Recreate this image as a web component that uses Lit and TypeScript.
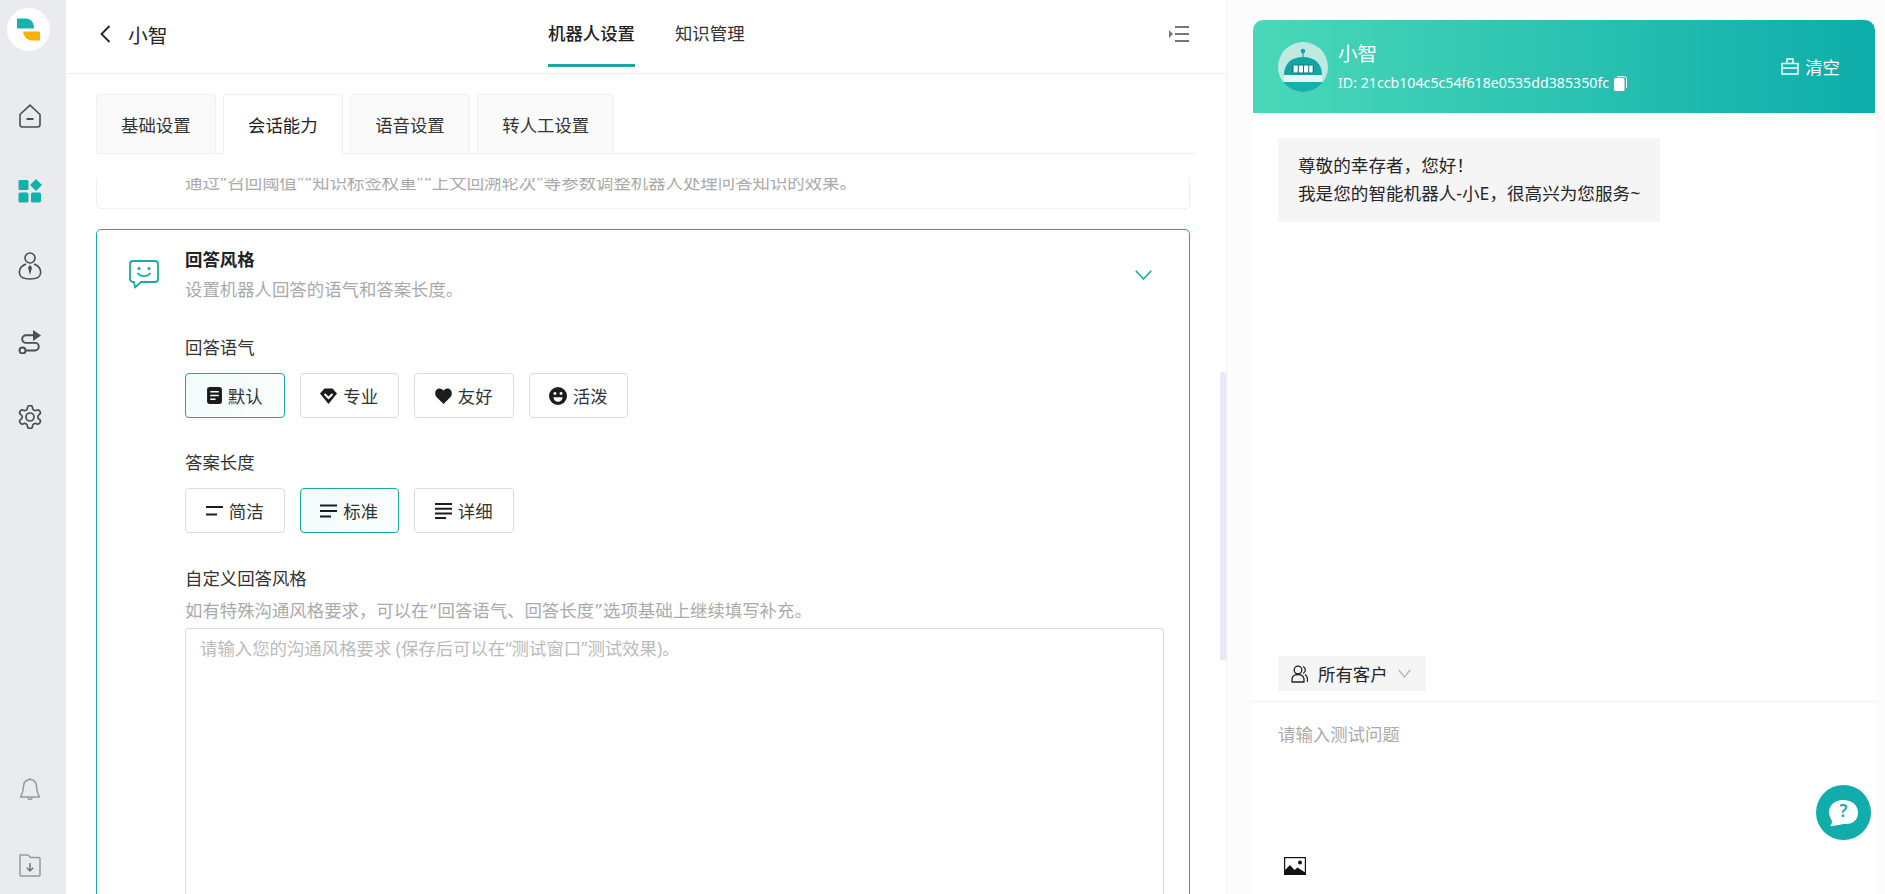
import { LitElement, html, css } from "lit";
import { customElement } from "lit/decorators.js";

const toneIcons = {
  doc: html`<svg width="15" height="17" viewBox="0 0 14 16"><rect width="14" height="16" rx="2.500" fill="#1c1c1c"/><path d="M3 4.500h8M3 8h8M3 11.500h5" stroke="#fff" stroke-width="1.300"/></svg>`,
  gem: html`<svg width="17" height="16" viewBox="0 0 17 16"><path d="M4.500 .5h8L17 5.500 8.500 16 0 5.500z" fill="#1c1c1c"/><path d="M4.500 6l4 4 4-4" fill="none" stroke="#fff" stroke-width="2"/></svg>`,
  heart: html`<svg width="17" height="16" viewBox="0 0 17 16"><path d="M8.500 16L1.500 9C-1 6.300.2 .5 4.500 .5c2 0 3.200 1 4 2.200C9.300 1.500 10.500 .5 12.500 .5c4.300 0 5.500 5.800 3 8.500z" fill="#1c1c1c"/></svg>`,
  smile: html`<svg width="18" height="18" viewBox="0 0 16 16"><circle cx="8" cy="8" r="8" fill="#1c1c1c"/><circle cx="5.300" cy="5.800" r="1.300" fill="#fff"/><circle cx="10.700" cy="5.800" r="1.300" fill="#fff"/><path d="M4 9h8c0 2.500-1.800 4-4 4s-4-1.500-4-4z" fill="#fff"/></svg>`,
  short: html`<svg width="17" height="16" viewBox="0 0 17 16"><path d="M0 4h17M0 11.500h11" stroke="#1c1c1c" stroke-width="2.200"/></svg>`,
  normal: html`<svg width="17" height="16" viewBox="0 0 17 16"><path d="M0 2.500h17M0 8h17M0 13.500h11" stroke="#1c1c1c" stroke-width="2.200"/></svg>`,
  long: html`<svg width="17" height="16" viewBox="0 0 17 16"><path d="M0 1h17M0 5.700h17M0 10.400h17M0 15h11" stroke="#1c1c1c" stroke-width="2"/></svg>`,
};

const gearPath =
  "M12.22 2h-.44a2 2 0 0 0-2 2v.18a2 2 0 0 1-1 1.73l-.43.25a2 2 0 0 1-2 0l-.15-.08a2 2 0 0 0-2.73.73l-.22.38a2 2 0 0 0 .73 2.73l.15.1a2 2 0 0 1 1 1.72v.51a2 2 0 0 1-1 1.74l-.15.09a2 2 0 0 0-.73 2.73l.22.38a2 2 0 0 0 2.73.73l.15-.08a2 2 0 0 1 2 0l.43.25a2 2 0 0 1 1 1.73V20a2 2 0 0 0 2 2h.44a2 2 0 0 0 2-2v-.18a2 2 0 0 1 1-1.73l.43-.25a2 2 0 0 1 2 0l.15.08a2 2 0 0 0 2.73-.73l.22-.39a2 2 0 0 0-.73-2.73l-.15-.08a2 2 0 0 1-1-1.74v-.5a2 2 0 0 1 1-1.74l.15-.09a2 2 0 0 0 .73-2.73l-.22-.38a2 2 0 0 0-2.73-.73l-.15.08a2 2 0 0 1-2 0l-.43-.25a2 2 0 0 1-1-1.73V4a2 2 0 0 0-2-2z";

const tones = [
  { icon: toneIcons.doc, label: "默认", active: true },
  { icon: toneIcons.gem, label: "专业" },
  { icon: toneIcons.heart, label: "友好" },
  { icon: toneIcons.smile, label: "活泼" },
];
const lengths = [
  { icon: toneIcons.short, label: "简洁" },
  { icon: toneIcons.normal, label: "标准", active: true },
  { icon: toneIcons.long, label: "详细" },
];

const lq = html`<span class="q">“</span>`;
const rq = html`<span class="q">”</span>`;

@customElement("app-root")
export class AppRoot extends LitElement {
  static styles = css`
    :host {
      display: flex;
      position: relative;
      width: 1885px;
      height: 894px;
      overflow: hidden;
      background: #fff;
      color: #262626;
      font-family: "Noto Sans", "Noto Sans CJK SC", sans-serif;
      font-size: 17.400px;
    }
    svg {
      display: block;
    }
    .q {
      margin: 0 1.400px;
    }
    .card-prev .q {
      margin: 0 0.700px;
    }

    /* left icon rail */
    .rail {
      width: 66px;
      flex: none;
      background: #e9ebef;
      display: flex;
      flex-direction: column;
      justify-content: space-between;
      box-sizing: border-box;
      padding: 8px 0 17px 18px;
    }
    .logo {
      width: 43px;
      height: 43px;
      border-radius: 50%;
      background: #fff;
      margin-left: -11px;
    }
    .rail-items {
      display: flex;
      flex-direction: column;
      gap: 51.200px;
      margin-top: 53px;
    }
    .rail-bottom {
      display: flex;
      flex-direction: column;
      gap: 52px;
    }
    .rail svg.ic {
      width: 24px;
      height: 24px;
    }
    .rail svg.ic.tall {
      height: 28px;
      margin: -2px 0;
    }

    /* middle column */
    .main {
      position: relative;
      width: 1161px;
      flex: none;
      box-sizing: border-box;
      border-right: 1px solid #f0f0f0;
      display: flex;
      flex-direction: column;
      min-height: 0;
    }
    .scrollbar {
      position: absolute;
      right: 0;
      top: 372px;
      width: 6px;
      height: 288px;
      border-radius: 3px 3px 0 0;
      background: #e8e9f6;
    }
    .topbar {
      height: 74px;
      flex: none;
      box-sizing: border-box;
      border-bottom: 1px solid #f0f0f0;
      display: flex;
      padding: 0 37px 0 34px;
    }
    .back {
      width: 448px;
      display: flex;
      align-items: center;
      gap: 17px;
      font-size: 19.800px;
      height: 68px;
    }
    .nav {
      display: flex;
      gap: 40px;
    }
    .nav-item {
      height: 67px;
      box-sizing: border-box;
      padding-top: 1px;
      border-bottom: 3px solid transparent;
      display: flex;
      align-items: center;
      color: #333;
    }
    .nav-item.on {
      border-bottom-color: #1aa7a0;
      color: #222;
      font-weight: 500;
    }
    .menu {
      margin-left: auto;
      margin-top: 26px;
      width: 20px;
      height: 16px;
    }
    .subtabs {
      flex: none;
      display: flex;
      gap: 7.500px;
      height: 60px;
      margin: 20px 30px 0;
      box-sizing: border-box;
      border-bottom: 1px solid #efefef;
    }
    .subtab {
      height: 60px;
      box-sizing: border-box;
      padding: 0 24px;
      background: #fafafa;
      border: 1px solid #f0f0f0;
      border-radius: 3px 3px 0 0;
      display: flex;
      align-items: center;
      color: #333;
    }
    .subtab.on {
      background: #fff;
      border-bottom-color: #fff;
      color: #222;
    }
    .clip {
      flex: 1;
      min-height: 0;
      overflow: hidden;
      margin: 24px 36px 0 30px;
    }
    .card {
      border: 1px solid #efefef;
      border-radius: 5px;
      box-sizing: border-box;
    }
    .card-prev {
      margin-top: -19px;
      padding: 10px 0 14px 88px;
      margin-bottom: 20px;
      line-height: 24px;
      color: #aaa;
    }
    .card-style {
      border-color: #1aa9a3;
      padding: 18px 25px 40px 0;
    }
    .card-head {
      display: flex;
      align-items: center;
      padding-right: 12px;
    }
    .card-icon {
      width: 30px;
      height: 29px;
      margin: 0 26px 0 32px;
      flex: none;
    }
    .card-title {
      font-weight: 700;
      line-height: 22px;
      color: #222;
    }
    .card-sub {
      margin-top: 7px;
      line-height: 24px;
      color: #aaa;
    }
    .chev {
      width: 17px;
      height: 10px;
      margin-left: auto;
    }
    .fields {
      padding-left: 88px;
    }
    .label {
      line-height: 24px;
      color: #333;
    }
    .label.first {
      margin-top: 34px;
    }
    .label.next {
      margin-top: 32px;
    }
    .label.tail {
      margin-top: 33px;
    }
    .opts {
      display: flex;
      gap: 15px;
      margin-top: 14px;
    }
    .opt {
      width: 99.500px;
      height: 45px;
      box-sizing: border-box;
      border: 1px solid #dcdcdc;
      border-radius: 4px;
      background: #fff;
      display: flex;
      align-items: center;
      justify-content: center;
      gap: 6px;
      color: #333;
    }
    .opt.on {
      border-color: #1aa9a3;
      background: linear-gradient(120deg, #f2fbfb, #fafefd);
    }
    .hint {
      margin-top: 8px;
      line-height: 24px;
      color: #aaa;
    }
    .box {
      display: block;
      width: 100%;
      height: 300px;
      margin-top: 6px;
      box-sizing: border-box;
      border: 1px solid #d9d9d9;
      border-radius: 3px;
      padding: 7px 14px;
      font: inherit;
      line-height: 24px;
      resize: none;
      outline: none;
    }
    .box::placeholder {
      color: #bbb;
    }

    /* chat preview */
    .side {
      flex: 1;
      min-width: 0;
      background: #fcfcfc;
      box-sizing: border-box;
      padding: 20px 10px 0 26px;
      display: flex;
    }
    .chat {
      flex: 1;
      background: #fff;
      border-radius: 10px 10px 0 0;
      display: flex;
      flex-direction: column;
      min-height: 0;
    }
    .chat-head {
      height: 93px;
      flex: none;
      box-sizing: border-box;
      border-radius: 10px 10px 0 0;
      background: linear-gradient(90deg, #4ad8b8, #0dadaa);
      color: #fff;
      display: flex;
      align-items: center;
      padding: 0 35px 0 25px;
    }
    .avatar {
      width: 50px;
      height: 50px;
      flex: none;
      margin-right: 10px;
    }
    .who {
      padding-top: 3px;
    }
    .name {
      font-size: 19.600px;
      line-height: 26px;
    }
    .uid {
      margin-top: 4px;
      font-size: 14.200px;
      line-height: 24px;
      display: flex;
      align-items: center;
      gap: 5px;
    }
    .copy {
      width: 13px;
      height: 15px;
    }
    .clear {
      margin-left: auto;
      display: flex;
      align-items: center;
      gap: 6px;
    }
    .clear svg {
      width: 18px;
      height: 17px;
    }
    .chat-body {
      flex: 1;
      min-height: 0;
      box-sizing: border-box;
      padding: 25px 25px 10px;
      display: flex;
      flex-direction: column;
      align-items: flex-start;
    }
    .bubble {
      background: #f5f5f5;
      padding: 14.400px 20px;
      font-size: 17.600px;
      line-height: 27.600px;
      color: #262626;
    }
    .audience {
      margin-top: auto;
      height: 35px;
      width: 148px;
      box-sizing: border-box;
      background: #f5f5f5;
      display: flex;
      align-items: center;
      padding-left: 13px;
    }
    .audience .users {
      width: 17px;
      height: 18px;
      margin-right: 10px;
    }
    .audience .down {
      width: 13px;
      height: 9px;
      margin-left: 10px;
    }
    .composer {
      height: 193px;
      flex: none;
      box-sizing: border-box;
      border-top: 1px solid #f0f0f0;
      padding: 20px 25px 19px;
      display: flex;
      flex-direction: column;
    }
    .ask {
      flex: 1;
      border: none;
      outline: none;
      resize: none;
      padding: 0;
      font: inherit;
      line-height: 24px;
    }
    .ask::placeholder {
      color: #aaa;
    }
    .pic {
      width: 22px;
      height: 18px;
      margin-left: 6px;
    }
    .help {
      position: absolute;
      right: 14px;
      top: 785px;
      width: 55px;
      height: 55px;
      border-radius: 50%;
      background: #11adab;
    }
    .help svg {
      width: 55px;
      height: 55px;
    }
    .help span {
      position: absolute;
      left: 0;
      right: 0;
      top: 14px;
      text-align: center;
      font-size: 17px;
      line-height: 24px;
      font-weight: 600;
      color: #11adab;
    }
  `;

  renderOpts(items: typeof tones) {
    return html`<div class="opts">
      ${items.map(
        (o) => html`<div class="opt ${o.active ? "on" : ""}">${o.icon}<span>${o.label}</span></div>`
      )}
    </div>`;
  }

  render() {
    return html`
      <aside class="rail">
        <div>
          <div class="logo">
            <svg viewBox="0 0 43 43" width="43" height="43">
              <path d="M10 10.500h8.500c5.500 0 8.500 4 8.500 10H10z" fill="#17b2b0"/>
              <path d="M16 23.500h17v9h-8c-5 0-8-3.500-9-9z" fill="#fbb005"/>
            </svg>
          </div>
          <div class="rail-items">
            <svg class="ic" viewBox="0 0 24 24" fill="none" stroke="#4d4d4d" stroke-width="1.600" stroke-linejoin="round">
              <path d="M2 10.500 12 1.200l10 9.300v10a2.500 2.500 0 0 1-2.500 2.500h-15A2.500 2.500 0 0 1 2 20.500z"/>
              <path d="M8.500 15h7" stroke-width="2"/>
            </svg>
            <svg class="ic" viewBox="0 0 24 24" fill="#14b1ab">
              <rect x="0.500" y="1" width="10" height="10" rx="1.500"/>
              <path d="M18 0l6 6-6 6-6-6z"/>
              <rect x="0.500" y="13.500" width="10" height="10" rx="1.500"/>
              <rect x="13" y="13.500" width="10" height="10" rx="1.500"/>
            </svg>
            <svg class="ic tall" viewBox="0 0 24 28" fill="none" stroke="#4d4d4d" stroke-width="1.600">
              <circle cx="12" cy="6" r="5"/>
              <path d="M8 12C3 14 1 18 1.500 21.500 2 26 7 27 12 27s10-1 10.500-5.500C23 18 21 14 16 12"/>
              <path d="M12 13l-2 2.500 2 7.500 2-7.500z" fill="#4d4d4d" stroke="none"/>
            </svg>
            <svg class="ic" viewBox="0 0 24 24" fill="none" stroke="#4d4d4d" stroke-width="1.900">
              <circle cx="4.500" cy="20.500" r="3"/>
              <path d="M8 20.500h9a3.800 3.800 0 0 0 0-7.600H8a3.800 3.800 0 0 1 0-7.600h7"/>
              <path d="M15 0l8 5.500-8 5.500z" fill="#4d4d4d" stroke="none"/>
            </svg>
            <svg class="ic" viewBox="1.500 1.500 21 21" fill="none" stroke="#4d4d4d" stroke-width="1.500">
              <path d="${gearPath}"/>
              <circle cx="12" cy="12" r="3.500"/>
            </svg>
          </div>
        </div>
        <div class="rail-bottom">
          <svg class="ic" viewBox="0 0 24 24" fill="none" stroke="#999" stroke-width="1.500" stroke-linejoin="round">
            <path d="M5.500 9a6.500 6.500 0 0 1 13 0c0 6 1.500 8 3 11h-19c1.500-3 3-5 3-11z"/>
            <path d="M10 20.500a2 2 0 0 0 4 0M12 2.500V1"/>
          </svg>
          <svg class="ic" viewBox="0 0 24 24" fill="none" stroke="#999" stroke-width="1.500" stroke-linejoin="round">
            <path d="M2 2h8l2.500 2.500H21a1 1 0 0 1 1 1V22a1 1 0 0 1-1 1H3a1 1 0 0 1-1-1z"/>
            <path d="M12 10v8M8.800 14.800 12 18l3.200-3.200" stroke="#777"/>
          </svg>
        </div>
      </aside>

      <section class="main">
        <header class="topbar">
          <div class="back">
            <svg width="11" height="18" viewBox="0 0 11 18" fill="none" stroke="#222" stroke-width="1.800"><path d="M9.500 1 1.500 9l8 8"/></svg>
            <span>小智</span>
          </div>
          <nav class="nav">
            <div class="nav-item on">机器人设置</div>
            <div class="nav-item">知识管理</div>
          </nav>
          <svg class="menu" viewBox="0 0 20 16">
            <path d="M0 4l4 4-4 4z" fill="#777"/>
            <path d="M6 1h14M6 8h14M6 15h14" stroke="#777" stroke-width="2"/>
          </svg>
        </header>

        <div class="subtabs">
          <div class="subtab">基础设置</div>
          <div class="subtab on">会话能力</div>
          <div class="subtab">语音设置</div>
          <div class="subtab">转人工设置</div>
        </div>

        <div class="clip">
          <div class="card card-prev">通过${lq}召回阈值${rq}${lq}知识标签权重${rq}${lq}上文回溯轮次${rq}等参数调整机器人处理问答知识的效果。</div>
          <div class="card card-style">
            <div class="card-head">
              <svg class="card-icon" viewBox="0 0 30 29" fill="none" stroke="#1aa9a3" stroke-width="1.800">
                <path d="M4 1h22a3 3 0 0 1 3 3v15a3 3 0 0 1-3 3H12l-6 5.500-1-5.500H4a3 3 0 0 1-3-3V4a3 3 0 0 1 3-3z" stroke-linejoin="round"/>
                <circle cx="10" cy="8.500" r="1.600" fill="#1aa9a3" stroke="none"/>
                <circle cx="20" cy="8.500" r="1.600" fill="#1aa9a3" stroke="none"/>
                <path d="M9 13.500c3 3.500 9 3.500 12 0" stroke-linecap="round"/>
              </svg>
              <div>
                <div class="card-title">回答风格</div>
                <div class="card-sub">设置机器人回答的语气和答案长度。</div>
              </div>
              <svg class="chev" viewBox="0 0 17 10" fill="none" stroke="#1aa9a3" stroke-width="1.600"><path d="M.8.800 8.500 9l7.700-8.200"/></svg>
            </div>
            <div class="fields">
              <div class="label first">回答语气</div>
              ${this.renderOpts(tones)}
              <div class="label next">答案长度</div>
              ${this.renderOpts(lengths)}
              <div class="label tail">自定义回答风格</div>
              <div class="hint">如有特殊沟通风格要求，可以在${lq}回答语气、回答长度${rq}选项基础上继续填写补充。</div>
              <textarea class="box" placeholder="请输入您的沟通风格要求 (保存后可以在“测试窗口”测试效果)。"></textarea>
            </div>
          </div>
        </div>
        <div class="scrollbar"></div>
      </section>

      <section class="side">
        <div class="chat">
          <div class="chat-head">
            <svg class="avatar" viewBox="0 0 50 50">
              <defs><clipPath id="av"><circle cx="25" cy="25" r="25"/></clipPath></defs>
              <g clip-path="url(#av)">
                <rect width="50" height="50" fill="#bfe9e1"/>
                <path d="M25 8v8" stroke="#12a5a3" stroke-width="1.200"/>
                <circle cx="25" cy="9" r="2.300" fill="#12a5a3"/>
                <path d="M6 33c0-12 8-18 19-18s19 6 19 18z" fill="#12a5a3"/>
                <rect x="14" y="22.500" width="22" height="9" rx="3" fill="#0a7c82"/>
                <g fill="#f4fbf9"><rect x="15.500" y="23.500" width="4.200" height="7"/><rect x="20.800" y="23.500" width="4.200" height="7"/><rect x="26" y="23.500" width="4.200" height="7"/><rect x="31.200" y="23.500" width="3.500" height="7"/></g>
                <rect x="6" y="33" width="38" height="7" fill="#e6f7f3"/>
                <rect y="40" width="50" height="10" fill="#14b0ae"/>
              </g>
            </svg>
            <div class="who">
              <div class="name">小智</div>
              <div class="uid">
                ID: 21ccb104c5c54f618e0535dd385350fc
                <svg class="copy" viewBox="0 0 13 15">
                  <rect x="0" y="2" width="10.500" height="13" rx="1.500" fill="#fff"/>
                  <path d="M3 .7h7.500a2 2 0 0 1 2 2V12" fill="none" stroke="#fff"/>
                </svg>
              </div>
            </div>
            <div class="clear">
              <svg viewBox="0 0 18 17" fill="none" stroke="#fff" stroke-width="1.400">
                <path d="M6 5.500V1h6v4.500M1 5.500h16V16H1zM1 10h16"/>
              </svg>
              <span>清空</span>
            </div>
          </div>

          <div class="chat-body">
            <div class="bubble">尊敬的幸存者，您好！<br />我是您的智能机器人-小E，很高兴为您服务~</div>
            <div class="audience">
              <svg class="users" viewBox="0 0 17 18" fill="none" stroke="#222" stroke-width="1.300">
                <circle cx="7" cy="5" r="3.800"/>
                <path d="M1 17v-2.500c0-3 2.500-5 6-5s6 2 6 5V17z" stroke-linejoin="round"/>
                <path d="M12 1.500a3.800 3.800 0 0 1 0 7M14 9.500c1.500 1 2.500 2.500 2.500 5V17"/>
              </svg>
              <span>所有客户</span>
              <svg class="down" viewBox="0 0 13 9" fill="none" stroke="#aaa" stroke-width="1.200"><path d="M.8.800 6.500 8 12.200.8"/></svg>
            </div>
          </div>

          <div class="composer">
            <textarea class="ask" placeholder="请输入测试问题"></textarea>
            <svg class="pic" viewBox="0 0 22 18">
              <rect x=".6" y=".6" width="20.800" height="16.800" fill="#fff" stroke="#111" stroke-width="1.200"/>
              <circle cx="16" cy="5.500" r="2" fill="#111"/>
              <path d="M0 18v-4l6-6 4.500 5 3-2.500L22 16v2z" fill="#111"/>
            </svg>
          </div>
        </div>
      </section>

      <div class="help">
        <svg viewBox="0 0 55 55">
          <path d="M27 15c9 0 15 5 15 12.500S37 39 30 39c-6 0-9 2-16 2 2-2 2.500-4 1.500-6-1-2-2.500-4-2.500-7.500C13 20 19 15 27 15z" fill="#fff"/>
        </svg>
        <span>?</span>
      </div>
    `;
  }
}
